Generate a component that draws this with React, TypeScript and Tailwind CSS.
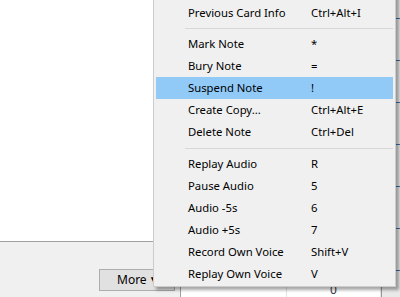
import React from "react"

type Item = { label: string; keys: string; active?: boolean } | { sep: true; h: number; off: number }

const items: Item[] = [
    { label: "Previous Card Info", keys: "Ctrl+Alt+I" },
    { sep: true, h: 9, off: 4 },
    { label: "Mark Note", keys: "*" },
    { label: "Bury Note", keys: "=" },
    { label: "Suspend Note", keys: "!", active: true },
    { label: "Create Copy...", keys: "Ctrl+Alt+E" },
    { label: "Delete Note", keys: "Ctrl+Del" },
    { sep: true, h: 10, off: 5 },
    { label: "Replay Audio", keys: "R" },
    { label: "Pause Audio", keys: "5" },
    { label: "Audio -5s", keys: "6" },
    { label: "Audio +5s", keys: "7" },
    { label: "Record Own Voice", keys: "Shift+V" },
    { label: "Replay Own Voice", keys: "V" },
]

const ticks = [18, 60, 102, 144, 186, 228, 270]

export default function App() {
    return (
        <div
            className="relative w-[400px] h-[297px] overflow-hidden flex bg-white text-[11.3px] text-black"
            style={{ fontFamily: '"Noto Sans", "Segoe UI", sans-serif' }}
        >
            {/* left panel: editor area + bottom bar */}
            <div className="w-[180px] flex flex-col">
                <div className="h-[242px] bg-white border-b border-[#a0a0a0]" />
                <div className="flex-1 bg-[#f0f0f0] pt-[27px] pl-[99px]">
                    <button className="w-[76px] h-[22px] border border-[#adadad] bg-[#e1e1e1] text-left pl-[17px] leading-[20px] text-[12px] whitespace-nowrap flex items-center">
                        More
                        <span className="ml-[4px] text-[9px] font-bold" style={{ fontFamily: '"DejaVu Sans", sans-serif' }}>▼</span>
                    </button>
                </div>
            </div>

            {/* right panel: card table */}
            <div className="flex-1 flex border-l border-[#a0a0a0] bg-white relative">
                <div className="w-[106px] border-r border-[#e3e3e3]" />
                <div className="w-[94px] border-r border-[#e3e3e3] flex justify-center pt-[281px] text-[#333848] text-[12px]">0</div>
                <div className="flex-1 bg-[#e9e9e9] border-l border-[#9a9a9a]">
                    {ticks.map((t) => (
                        <div key={t} className="absolute right-0 w-[4px] h-px bg-[#3b6fa8]" style={{ top: t }} />
                    ))}
                </div>
            </div>

            {/* context menu */}
            <div className="absolute left-[153px] top-[-11px] w-[243px] bg-[#f0f0f0] border border-[#cccccc] px-[2px] pt-[12px] pb-[1px] shadow-[3px_3px_3px_rgba(0,0,0,0.35)]">
                {items.map((it, i) =>
                    "sep" in it ? (
                        <div key={i} style={{ height: it.h, paddingTop: it.off }}>
                            <div className="ml-[29px] h-px bg-[#d7d7d7]" />
                        </div>
                    ) : (
                        <div
                            key={i}
                            className={`flex items-center h-[22px] pl-[32px] ${it.active ? "bg-[#91c9f7]" : ""}`}
                        >
                            <span className="w-[123px] whitespace-nowrap">{it.label}</span>
                            <span className="whitespace-nowrap">{it.keys}</span>
                        </div>
                    )
                )}
            </div>
        </div>
    )
}
